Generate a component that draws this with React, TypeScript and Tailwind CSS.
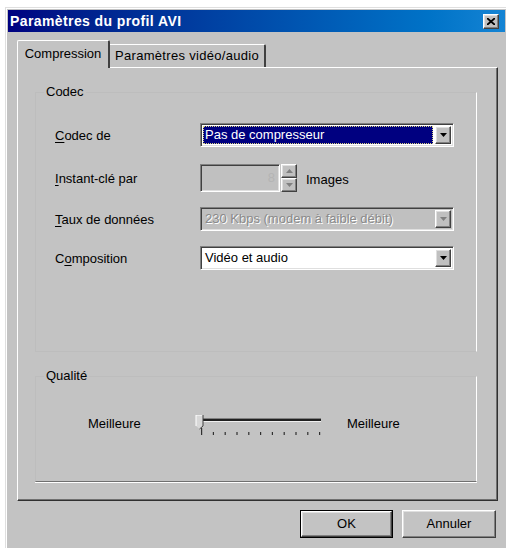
import React from "react";

// Win98 bevels
const raised =
  "border border-t-white border-l-white border-r-[#404040] border-b-[#404040] shadow-[inset_-1px_-1px_0_#808080,inset_1px_1px_0_#dfdfdf]";
const sunken =
  "border border-t-[#808080] border-l-[#808080] border-r-white border-b-white shadow-[inset_1px_1px_0_#404040,inset_-1px_-1px_0_#dfdfdf]";

function Arrow({ disabled = false, up = false }: { disabled?: boolean; up?: boolean }) {
  const fill = disabled ? "#808080" : "#000";
  return (
    <svg width="7" height="4" viewBox="0 0 7 4">
      {up ? <path d="M3.5 0 L7 4 L0 4 Z" fill={fill} /> : <path d="M0 0 L7 0 L3.5 4 Z" fill={fill} />}
    </svg>
  );
}

function DropButton({ disabled = false }: { disabled?: boolean }) {
  return (
    <div className={`w-[16px] h-full flex items-center justify-center bg-[#c0c0c0] ${raised}`}>
      <Arrow disabled={disabled} />
    </div>
  );
}

function Select({
  value,
  selected = false,
  disabled = false,
}: {
  value: string;
  selected?: boolean;
  disabled?: boolean;
}) {
  return (
    <div
      className={`w-[254px] h-[24px] flex items-stretch p-[2px] ${sunken} ${
        disabled ? "bg-[#c0c0c0]" : "bg-white"
      }`}
    >
      <div className="flex-1 flex items-center pr-[2px]">
        {selected ? (
          <div className="w-full h-full flex items-center bg-[#000080] text-white pl-[2px] outline outline-1 outline-dotted outline-[#d8d080] -outline-offset-1">
            {value}
          </div>
        ) : (
          <span
            className={`pl-[2px] ${disabled ? "text-[#8a8a8a] [text-shadow:1px_1px_0_#fff]" : "text-black"}`}
          >
            {value}
          </span>
        )}
      </div>
      <DropButton disabled={disabled} />
    </div>
  );
}

function Label({ text, keyIndex }: { text: string; keyIndex: number }) {
  return (
    <span className="w-[145px] shrink-0 pt-[2px]">
      {text.slice(0, keyIndex)}
      <span className="underline underline-offset-2">{text[keyIndex]}</span>
      {text.slice(keyIndex + 1)}
    </span>
  );
}

function Slider() {
  const ticks = Array.from({ length: 11 }, (_, i) => 6 + i * 11.8);
  return (
    <svg width="128" height="24" viewBox="0 0 128 24">
      {/* track */}
      <rect x="6" y="3" width="120" height="1" fill="#808080" />
      <rect x="6" y="4" width="120" height="2" fill="#202020" />
      <rect x="6" y="6" width="120" height="1" fill="#f0f0f0" />
      {/* thumb */}
      <path d="M1 0 H8 V11 L4.5 14 L1 11 Z" fill="#d8d8d8" />
      <path d="M1 11 V0 H8" fill="none" stroke="#fff" strokeWidth="1" />
      <path d="M8 0 V11 L4.5 14" fill="none" stroke="#404040" strokeWidth="1" />
      {/* ticks */}
      {ticks.map((x, i) => (
        <rect key={i} x={x} y={i === 0 ? 13 : 17} width="1.2" height={i === 0 ? 7 : 3} fill="#303030" />
      ))}
    </svg>
  );
}

export default function App() {
  return (
    <div className="w-[506px] h-[548px] bg-white pl-[5px] pt-[7px] overflow-hidden font-['Liberation_Sans',Arial,sans-serif] text-[13px] leading-[16px] text-black">
      <div className="w-[503px] h-[545px] bg-[#c3c3c3] border border-t-[#dfdfdf] border-l-[#dfdfdf] border-r-[#404040] border-b-[#404040] shadow-[inset_1px_1px_0_#fff,inset_-1px_-1px_0_#808080] p-[2px] flex flex-col">
        {/* title bar */}
        <div className="h-[22px] flex items-center justify-between bg-linear-to-r from-[#000080] to-[#1484d4] pl-[2px] pr-[6px]">
          <span className="text-white font-bold text-[14px] tracking-[0.4px]">Paramètres du profil AVI</span>
          <div className={`w-[16px] h-[15px] bg-[#c0c0c0] flex items-center justify-center ${raised}`}>
            <svg width="8" height="7" viewBox="0 0 8 7">
              <path d="M0 0 L8 7 M8 0 L0 7" stroke="#000" strokeWidth="1.8" />
            </svg>
          </div>
        </div>

        {/* body */}
        <div className="pl-[9px] pt-[8px] flex flex-col">
          {/* tabs */}
          <div className="flex items-end h-[27px]">
            <div className="relative z-10 -mb-px w-[93px] h-[28px] bg-[#c3c3c3] border-t border-l border-white border-r-2 border-r-[#404040] rounded-t-[2px] flex items-center justify-center pb-[2px]">
              Compression
            </div>
            <div className="w-[156px] h-[23px] bg-[#c3c3c3] border-t border-white border-r-2 border-r-[#404040] rounded-tr-[2px] flex items-center justify-center tracking-[0.3px]">
              Paramètres vidéo/audio
            </div>
          </div>

          {/* panel */}
          <div className="w-[481px] h-[434px] border border-t-white border-l-white border-r-[#303030] border-b-[#303030] shadow-[inset_-1px_-1px_0_#707070] flex flex-col">
            <fieldset className="ml-[17px] mt-[16px] w-[442px] h-[268px] border border-t-[#bdbdbd] border-l-[#bdbdbd] border-r-white border-b-[#bdbdbd]">
              <legend className="ml-[8px] px-[2px]">Codec</legend>
              <div className="pl-[19px] flex flex-col">
                <div className="mt-[23px] flex items-center">
                  <Label text="Codec de" keyIndex={0} />
                  <Select value="Pas de compresseur" selected />
                </div>
                <div className="mt-[17px] flex items-center">
                  <Label text="Instant-clé par" keyIndex={0} />
                  <div className={`w-[80px] h-[28px] bg-[#c0c0c0] flex items-center justify-end pr-[4px] ${sunken}`}>
                    <span className="text-[#b4b4b4]">8</span>
                  </div>
                  <div className="flex flex-col ml-px">
                    <div className={`w-[16px] h-[14px] bg-[#c0c0c0] flex items-center justify-center ${raised}`}>
                      <Arrow disabled up />
                    </div>
                    <div className={`w-[16px] h-[14px] bg-[#c0c0c0] flex items-center justify-center ${raised}`}>
                      <Arrow disabled />
                    </div>
                  </div>
                  <span className="ml-[9px] pt-[3px]">Images</span>
                </div>
                <div className="mt-[15px] flex items-center">
                  <Label text="Taux de données" keyIndex={0} />
                  <Select value="230 Kbps (modem à faible débit)" disabled />
                </div>
                <div className="mt-[15px] flex items-center">
                  <Label text="Composition" keyIndex={1} />
                  <Select value="Vidéo et audio" />
                </div>
              </div>
            </fieldset>

            <fieldset className="ml-[17px] mt-[16px] w-[442px] h-[114px] border border-t-[#bdbdbd] border-l-[#bdbdbd] border-r-white border-b-[#707070] shadow-[0_1px_0_#fff]">
              <legend className="ml-[8px] px-[2px]">Qualité</legend>
              <div className="pl-[52px] mt-[31px] flex items-start">
                <span className="w-[107px] shrink-0 pt-[1px]">Meilleure</span>
                <Slider />
                <span className="ml-[24px] pt-[1px]">Meilleure</span>
              </div>
            </fieldset>
          </div>

          {/* buttons */}
          <div className="w-[481px] mt-[9px] flex justify-end gap-[9px] pr-[2px]">
            <div className="w-[93px] h-[28px] border border-black">
              <div className={`w-full h-full bg-[#c3c3c3] flex items-center justify-center ${raised}`}>OK</div>
            </div>
            <div className={`w-[94px] h-[28px] bg-[#c3c3c3] flex items-center justify-center ${raised}`}>Annuler</div>
          </div>
        </div>
      </div>
    </div>
  );
}
